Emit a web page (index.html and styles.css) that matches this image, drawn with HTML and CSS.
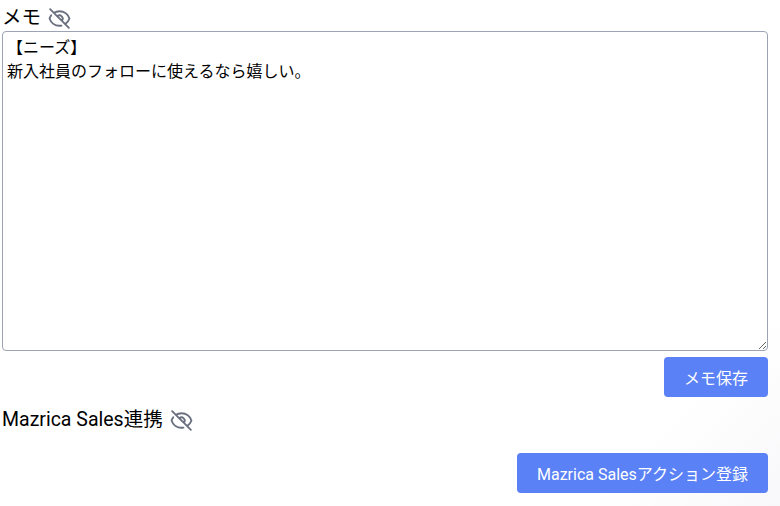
FILE: index.html
```html
<!DOCTYPE html>
<html lang="ja">
<head>
    <title>メモ</title>
    <link rel="stylesheet" href="styles.css">
</head>
<body>
    <section class="memo-section">
        <div class="section-title">
            <span>メモ</span>
            <svg class="eye-off" viewBox="0 0 24 24" aria-hidden="true">
                <path d="M13.875 18.825A10.05 10.05 0 0112 19c-4.478 0-8.268-2.943-9.543-7a9.97 9.97 0 011.563-3.029m5.858.908a3 3 0 114.243 4.243M9.878 9.878l4.242 4.242M9.88 9.88l-3.29-3.29m7.532 7.532l3.29 3.29M3 3l3.59 3.59m0 0A9.953 9.953 0 0112 5c4.478 0 8.268 2.943 9.543 7a10.025 10.025 0 01-4.132 5.411m0 0L21 21"/>
            </svg>
        </div>
        <textarea class="memo-input">【ニーズ】
新入社員のフォローに使えるなら嬉しい。</textarea>
        <div class="button-row">
            <button type="button" class="primary-button">メモ保存</button>
        </div>
    </section>

    <section class="sales-section">
        <div class="section-title">
            <span>Mazrica Sales連携</span>
            <svg class="eye-off" viewBox="0 0 24 24" aria-hidden="true">
                <path d="M13.875 18.825A10.05 10.05 0 0112 19c-4.478 0-8.268-2.943-9.543-7a9.97 9.97 0 011.563-3.029m5.858.908a3 3 0 114.243 4.243M9.878 9.878l4.242 4.242M9.88 9.88l-3.29-3.29m7.532 7.532l3.29 3.29M3 3l3.59 3.59m0 0A9.953 9.953 0 0112 5c4.478 0 8.268 2.943 9.543 7a10.025 10.025 0 01-4.132 5.411m0 0L21 21"/>
            </svg>
        </div>
        <div class="button-row sales-row">
            <button type="button" class="primary-button">Mazrica Salesアクション登録</button>
        </div>
    </section>
</body>
</html>
```

FILE: styles.css
```css
html {
    min-height: 100%;
    background: linear-gradient(135deg, #FFFFFF 85%, #F8F8FA 100%);
}

body {
    margin: 0;
    padding: 0 12px 0 2px;
    color: #000000;
    font-family: Roboto, "Noto Sans CJK JP", sans-serif;
}

.section-title {
    display: flex;
    align-items: center;
    column-gap: 6px;
    height: 31px;
    font-size: 19.5px;
}

.eye-off {
    width: 25px;
    height: 25px;
    margin-top: 6px;
    fill: none;
    stroke: #6B7080;
    stroke-width: 1.8;
    stroke-linecap: round;
    stroke-linejoin: round;
}

.memo-input {
    display: block;
    box-sizing: border-box;
    width: 766px;
    height: 320px;
    margin: 0;
    padding: 4px;
    border: 1px solid #9CA3B4;
    border-radius: 4px;
    font-family: inherit;
    font-size: 16px;
    line-height: 24px;
    color: #000000;
}

.button-row {
    display: flex;
    justify-content: flex-end;
    margin-top: 6px;
}

.primary-button {
    height: 40px;
    padding: 0 20px;
    border: none;
    border-radius: 4px;
    background-color: #5A81F5;
    color: #FFFFFF;
    font-family: inherit;
    font-size: 16px;
    cursor: pointer;
}

.sales-section {
    margin-top: 5px;
}

.sales-row {
    margin-top: 20px;
}
```
